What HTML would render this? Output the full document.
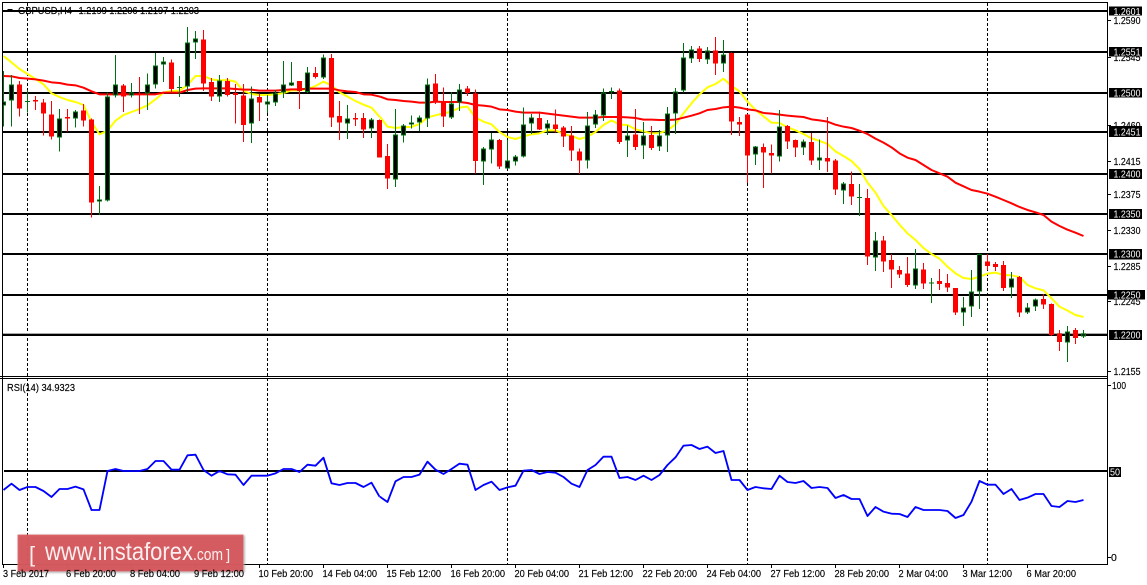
<!DOCTYPE html>
<html><head><meta charset="utf-8"><style>
html,body{margin:0;padding:0;background:#fff;width:1147px;height:585px;overflow:hidden}
svg{display:block}
text{font-family:"Liberation Sans",sans-serif;font-size:10.5px;fill:#000;stroke:#000;stroke-width:.15}
.l text,text.w{fill:#fff;stroke:none}
.ma{fill:none;stroke-linejoin:round}
.wr{fill:none;stroke:#f00;stroke-width:3}
.br{fill:none;stroke:#f00;stroke-width:15}
.wg{fill:none;stroke:#007010;stroke-width:3}
.bg{fill:none;stroke:#007010;stroke-width:15}
.bk{fill:none;stroke:#000;stroke-width:9}
</style></head><body>
<svg width="1147" height="585" viewBox="0 0 1147 585" xmlns="http://www.w3.org/2000/svg">
<defs><clipPath id="c"><rect x="3" y="3" width="1104" height="373"/></clipPath></defs>
<rect width="1147" height="585" fill="#fff"/>

<!-- vertical grid -->
<path d="M27.5 3V564M267.5 3V564M507.5 3V564M747.5 3V564M987.5 3V564" stroke="#000" stroke-width="1" stroke-dasharray="3 2" fill="none" shape-rendering="crispEdges"/>

<!-- legend -->
<path d="M7 9h6l-3 3z" fill="#000"/>
<text x="18" y="14" textLength="54" lengthAdjust="spacingAndGlyphs">GBPUSD,H4</text>
<text x="78.5" y="14" textLength="120.5" lengthAdjust="spacingAndGlyphs">1.2199 1.2206 1.2197 1.2203</text>

<!-- horizontal levels -->
<g fill="#000" shape-rendering="crispEdges">
<rect x="3" y="10" width="1104" height="2"/>
<rect x="3" y="51" width="1104" height="2"/>
<rect x="3" y="92" width="1104" height="2"/>
<rect x="3" y="131" width="1104" height="2"/>
<rect x="3" y="173" width="1104" height="2"/>
<rect x="3" y="213" width="1104" height="2"/>
<rect x="3" y="253" width="1104" height="2"/>
<rect x="3" y="294" width="1104" height="2"/>
<rect x="3" y="333" width="1104" height="1" fill="#aaa"/>
<rect x="3" y="334" width="1104" height="2"/>
<rect x="4" y="470" width="1103" height="2"/>
</g>

<g clip-path="url(#c)">
<!-- moving averages -->
<g transform="translate(0.17,0) scale(.33333)" class="ma" stroke="#ff0" stroke-width="6">
<polyline points="10,168 34,187 58,207 82,222 106,237 130,253 154,280 178,291 202,300 226,306 250,315 274,366 298,403 322,392 346,362 370,345 394,336 418,327 442,316 466,298 490,278 514,273 538,272 562,255 586,228 610,228 634,238 658,241 682,240 706,245 730,273 754,282 778,285 802,285 826,283 850,279 874,271 898,271 922,267 946,258 970,245 994,256 1018,277 1042,290 1066,303 1090,314 1114,323 1138,350"/>
</g>
<g transform="translate(380.17,0) scale(.33333)" class="ma" stroke="#ff0" stroke-width="6">
<polyline points="-1,350 22,380 46,384 70,381 94,381 118,372 142,352 166,346 190,340 214,335 238,323 262,320 286,353 310,365 334,373 358,396 382,411 406,417 430,409 454,403 478,400 502,391 526,391 550,402 574,408 598,417 622,410 646,396 670,375 694,361 718,374 742,375 766,388 790,394 814,400 838,399 862,391 886,373 910,340 934,310 958,283 982,262 1006,252 1030,236 1054,258 1078,274 1102,305 1126,330 1150,349"/>
</g>
<g transform="translate(760.17,0) scale(.33333)" class="ma" stroke="#ff0" stroke-width="6">
<polyline points="10,349 34,368 58,369 82,382 106,391 130,402 154,415 178,423 202,432 226,454 250,468 274,483 298,507 322,548 346,578 370,618 394,645 418,674 442,700 466,720 490,744 514,762 538,776 562,800 586,820 610,834 634,837 658,830 682,821 706,818 730,825 754,826 778,831 802,855 826,865 850,871 874,895 898,920 922,932 946,945 970,951"/>
</g>
<g transform="translate(0.17,0) scale(.33333)" class="ma" stroke="#f00" stroke-width="6">
<polyline points="10,228 34,229 58,234 82,236 106,238 130,242 154,247 178,249 202,254 226,256 250,263 274,274 298,283 322,283 466,283 490,278 538,278 562,270 586,266 610,265 682,265 706,267 730,269 754,269 778,272 826,272 850,270 874,268 898,268 922,266 994,266 1018,271 1042,274 1066,276 1090,283 1114,284 1140,290"/>
</g>
<g transform="translate(380.17,0) scale(.33333)" class="ma" stroke="#f00" stroke-width="6">
<polyline points="0,290 22,298 46,300 70,303 94,305 118,308 142,308 166,305 190,306 238,306 262,309 286,315 310,317 334,320 358,328 382,330 406,335 430,338 478,338 502,341 526,344 550,347 574,350 598,353 646,353 670,351 718,351 742,352 766,354 790,359 814,359 838,360 862,360 886,359 910,353 934,347 958,340 982,330 1006,327 1030,322 1054,320 1078,323 1102,328 1126,331 1150,339"/>
</g>
<g transform="translate(760.17,0) scale(.33333)" class="ma" stroke="#f00" stroke-width="6">
<polyline points="10,339 34,341 58,344 82,347 106,349 130,351 154,358 178,361 202,365 226,374 250,380 274,384 298,392 322,402 346,416 370,428 394,442 418,460 442,473 466,480 490,495 514,510 538,520 562,530 586,548 610,559 634,570 658,575 682,581 706,590 730,600 754,610 778,621 802,630 826,637 850,645 874,665 898,678 922,689 946,698 970,708"/>
</g>

<!-- candles -->
<g shape-rendering="crispEdges">
<g transform="translate(0.17,0) scale(.33333)">
<path class="wr" d="M58 243V350M106 288V330M130 297V407M154 303V419M202 327V394M250 312V380M274 355V653M370 252V336M418 231V342M514 178V279M610 90V273M634 234V303M682 234V290M706 252V370M730 252V426M778 280V363M898 243V327M946 201V235M994 162V381M1018 303V420M1066 339V378M1090 339V414M1138 358V473"/>
<path class="br" d="M58 253V326M106 300V304M130 307V341M154 343V410M202 351V356M250 331V362M274 358V608M370 256V290M418 282V284M514 187V267M610 118V251M634 246V290M682 243V285M706 279V285M730 286V375M778 291V308M898 243V273M946 219V231M994 174V353M1018 348V368M1066 354V359M1090 354V389M1138 360V473"/>
<path class="wg" d="M10 213V380M34 225V380M178 327V455M226 330V383M298 558V645M322 278V605M346 165V293M394 249V293M442 220V330M466 159V266M490 171V246M562 81V278M586 93V177M658 225V306M754 259V429M802 285V339M826 270V318M850 183V294M874 186V258M922 201V279M970 163V237M1042 315V417M1114 354V414M82 270V338M75 305h15M538 228V291M531 262h15"/>
<path class="bg" d="M10 304V316M34 253V301M178 355V412M226 334V355M298 598V604M322 289V602M346 253V286M394 278V287M442 253V281M466 196V253M490 184V193M562 127V259M586 115V127M658 241V290M754 295V370M802 304V314M826 280V307M850 253V278M874 247V256M922 217V276M970 172V232M1042 355V370M1114 358V385"/>
<path class="bk" d="M10 307V313M34 256V298M178 358V409M226 337V352M298 600V602M322 292V599M346 256V283M394 281V284M442 256V278M466 199V250M490 187V190M562 130V256M586 118V124M658 244V287M754 298V367M802 307V311M826 283V304M850 256V275M874 250V253M922 220V273M970 175V229M1042 358V367M1114 361V382"/>
</g>
<g transform="translate(380.17,0) scale(.33333)">
<path class="wr" d="M22 432V567M166 222V312M190 262V381M262 258V288M286 268V520M358 417V507M478 334V390M526 328V398M550 378V441M574 378V483M598 445V522M718 265V432M766 327V450M814 378V450M958 138V186M1006 111V225M1054 157V405M1078 351V408M1102 342V549"/>
<path class="br" d="M22 468V536M166 250V306M190 306V350M262 265V279M286 280V483M358 420V500M478 354V389M526 373V387M550 382V410M574 406V452M598 454V482M718 271V426M766 403V441M814 405V444M958 145V177M1006 151V191M1054 159V365M1078 366V374M1102 343V467"/>
<path class="wg" d="M46 327V561M70 372V428M94 346V385M118 346V393M142 235V381M214 276V357M238 252V333M310 441V555M334 399V491M382 420V507M406 465V497M430 322V473M454 342V402M502 360V405M622 336V506M646 330V384M670 265V363M742 376V471M790 366V477M838 390V453M862 321V456M886 264V402M910 129V277M934 138V189M982 141V192M1030 120V216M1126 438V495M694 262V297M687 275h15"/>
<path class="bg" d="M46 403V538M70 376V406M94 367V373M118 352V367M142 253V355M214 310V353M238 268V307M310 445V484M334 418V448M382 481V506M406 469V484M430 373V470M454 352V370M502 370V386M622 376V481M646 343V373M670 277V347M742 406V421M790 406V436M838 406V439M862 341V406M886 274V340M910 172V271M934 148V175M982 151V178M1030 163V190M1126 439V463"/>
<path class="bk" d="M46 406V535M70 379V403M94 369V371M118 355V364M142 256V352M214 313V350M238 271V304M310 448V481M334 421V445M382 484V503M406 472V481M430 376V467M454 355V367M502 373V383M622 379V478M646 346V370M670 280V344M742 409V418M790 409V433M838 409V436M862 344V403M886 277V337M910 175V268M934 151V172M982 154V175M1030 166V187M1126 442V460"/>
</g>
<g transform="translate(760.17,0) scale(.33333)">
<path class="wr" d="M10 430V564M34 433V520M82 375V447M106 418V471M154 399V495M202 351V516M226 477V585M274 514V615M322 567V795"/>
<path class="br" d="M10 441V458M34 459V467M82 378V425M106 420V443M154 426V482M202 474V485M226 481V569M274 552V590M322 594V770"/>
<path class="wg" d="M58 330V485M130 418V465M178 418V510M250 546V612M298 552V648M291 592h15"/>
<path class="bg" d="M58 380V469M130 424V442M178 472V481M250 550V571"/>
<path class="bk" d="M58 383V466M130 427V439M178 475V478M250 553V568"/>
</g>
<g transform="translate(760.17,180) scale(.33333)">
<path class="wr" d="M370 168V276M394 222V324M418 258V294M442 231V321M490 249V327M538 267V330M562 282V336M586 324V405M682 222V270M706 246V273M730 243V333M778 288V411M850 342V387M874 370V468M898 450V513M946 444V492"/>
<path class="br" d="M370 181V245M394 240V269M418 270V284M442 280V315M490 268V311M538 303V312M562 309V323M586 324V398M682 245V258M706 252V261M730 255V324M778 291V398M850 357V374M874 372V465M898 460V486M946 450V474"/>
<path class="wg" d="M346 156V273M466 207V327M610 351V438M634 270V411M658 220V387M754 276V354M802 369V402M826 355V393M922 438V546M970 450V474M514 294V369M507 309h15"/>
<path class="bg" d="M346 182V232M466 265V317M610 382V397M634 335V379M658 222V334M754 296V322M802 382V397M826 358V379M922 454V487M970 460V470"/>
<path class="bk" d="M346 185V229M466 268V314M610 385V394M634 338V376M658 225V331M754 299V319M802 385V394M826 361V376M922 457V484M970 463V467"/>
</g>
</g>
</g>

<!-- RSI -->
<g class="ma" stroke="#00f" stroke-width="5.5">
<polyline transform="translate(0.17,375) scale(.33333)" points="10,345 34,326 58,345 82,336 106,336 130,348 154,366 178,342 202,342 226,335 250,343 274,405 298,405 322,288 346,282 370,288 418,288 442,282 466,258 490,258 514,284 538,284 562,241 586,239 610,285 634,302 658,288 682,298 706,299 730,330 754,302 802,302 826,295 850,282 874,282 898,291 922,269 946,272 970,248 994,325 1018,330 1042,324 1066,324 1090,336 1114,323 1138,365"/>
<polyline transform="translate(380.17,375) scale(.33333)" points="-1,365 22,381 46,319 70,306 94,306 118,299 142,260 166,284 190,297 214,282 238,266 262,269 286,345 310,330 334,320 358,345 382,337 406,332 430,287 454,285 478,297 502,291 526,293 550,306 574,326 598,336 622,285 646,270 670,245 694,245 718,309 742,306 766,315 790,302 814,315 838,300 862,270 886,247 910,212 934,210 958,222 982,215 1006,234 1030,228 1054,315 1078,315 1102,345 1126,336 1150,340"/>
<polyline transform="translate(760.17,375) scale(.33333)" points="10,340 34,342 58,302 82,321 106,324 130,318 154,339 178,336 202,339 226,369 250,360 274,372 298,372 322,423 346,396 370,410 394,416 418,417 442,426 466,396 490,405 538,405 562,408 586,429 610,420 634,380 658,318 682,329 706,329 730,357 754,342 778,375 802,368 826,357 850,357 874,393 898,396 922,378 946,381 970,375"/>
</g>
<text x="7" y="391" textLength="68" lengthAdjust="spacingAndGlyphs">RSI(14) 34.9323</text>

<!-- frame -->
<g fill="#000" shape-rendering="crispEdges">
<rect x="2" y="2" width="1106" height="1"/>
<rect x="2" y="2" width="1" height="563"/>
<rect x="1107" y="2" width="1" height="563"/>
<rect x="0" y="376" width="1108" height="1"/>
<rect x="0" y="378" width="1108" height="1"/>
<rect x="2" y="564" width="1106" height="1"/>
<path d="M1108 20h3v1h-3zM1108 57h3v1h-3zM1108 125h3v1h-3zM1108 161h3v1h-3zM1108 194h3v1h-3zM1108 230h3v1h-3zM1108 266h3v1h-3zM1108 301h3v1h-3zM1108 371h3v1h-3zM1108 385h3v1h-3zM1108 557h3v1h-3z"/>
<path d="M3 565h1v3h-1zM67 565h1v3h-1zM131 565h1v3h-1zM195 565h1v3h-1zM259 565h1v3h-1zM323 565h1v3h-1zM387 565h1v3h-1zM451 565h1v3h-1zM515 565h1v3h-1zM579 565h1v3h-1zM643 565h1v3h-1zM707 565h1v3h-1zM771 565h1v3h-1zM835 565h1v3h-1zM899 565h1v3h-1zM963 565h1v3h-1zM1027 565h1v3h-1z"/>
</g>

<!-- axis prices -->
<g>
<text x="1113.5" y="24" textLength="27" lengthAdjust="spacingAndGlyphs">1.2590</text>
<text x="1113.5" y="61" textLength="27" lengthAdjust="spacingAndGlyphs">1.2545</text>
<text x="1113.5" y="129" textLength="27" lengthAdjust="spacingAndGlyphs">1.2460</text>
<text x="1113.5" y="165" textLength="27" lengthAdjust="spacingAndGlyphs">1.2415</text>
<text x="1113.5" y="198" textLength="27" lengthAdjust="spacingAndGlyphs">1.2375</text>
<text x="1113.5" y="234" textLength="27" lengthAdjust="spacingAndGlyphs">1.2330</text>
<text x="1113.5" y="270" textLength="27" lengthAdjust="spacingAndGlyphs">1.2285</text>
<text x="1113.5" y="305" textLength="27" lengthAdjust="spacingAndGlyphs">1.2245</text>
<text x="1113.5" y="375" textLength="27" lengthAdjust="spacingAndGlyphs">1.2155</text>
<text x="1112" y="389" textLength="14" lengthAdjust="spacingAndGlyphs">100</text>
<text x="1111" y="561">0</text>
</g>

<!-- price labels -->
<g fill="#000" shape-rendering="crispEdges">
<rect x="1109" y="6.500" width="33" height="9"/>
<rect x="1109" y="47" width="33" height="9.500"/>
<rect x="1109" y="88" width="33" height="9.500"/>
<rect x="1109" y="126" width="33" height="11"/>
<rect x="1109" y="169" width="33" height="10"/>
<rect x="1109" y="209" width="33" height="10"/>
<rect x="1109" y="249" width="33" height="10.500"/>
<rect x="1108" y="290" width="37" height="9.500"/>
<rect x="1109" y="330" width="33" height="10"/>
<rect x="1109" y="467" width="12" height="10"/>
</g>
<g class="l">
<text x="1113.5" y="15" textLength="27" lengthAdjust="spacingAndGlyphs">1.2601</text>
<text x="1113.5" y="55.500" textLength="27" lengthAdjust="spacingAndGlyphs">1.2551</text>
<text x="1113.5" y="96.500" textLength="27" lengthAdjust="spacingAndGlyphs">1.2500</text>
<text x="1113.5" y="135.500" textLength="27" lengthAdjust="spacingAndGlyphs">1.2451</text>
<text x="1113.5" y="177.500" textLength="27" lengthAdjust="spacingAndGlyphs">1.2400</text>
<text x="1113.5" y="217.500" textLength="27" lengthAdjust="spacingAndGlyphs">1.2350</text>
<text x="1113.5" y="257.500" textLength="27" lengthAdjust="spacingAndGlyphs">1.2300</text>
<text x="1113.5" y="298.500" textLength="27" lengthAdjust="spacingAndGlyphs">1.2250</text>
<text x="1113.5" y="338.500" textLength="27" lengthAdjust="spacingAndGlyphs">1.2200</text>
<text x="1110" y="475.500" textLength="10" lengthAdjust="spacingAndGlyphs">50</text>
</g>

<!-- watermark -->
<rect x="17.500" y="534.500" width="226" height="37" fill="#dc4f55" fill-opacity=".86" stroke="#fff" stroke-opacity=".15" style="filter:drop-shadow(1px 1px 1px #999)"/>
<text class="w" x="29" y="562" style="font-size:22px" opacity=".9">[</text>
<text class="w" x="45" y="560" style="font-size:25px" textLength="148" lengthAdjust="spacingAndGlyphs" opacity=".9">www.instaforex</text>
<text class="w" x="193" y="560" style="font-size:17px" textLength="30" lengthAdjust="spacingAndGlyphs" opacity=".9">.com</text>
<text class="w" x="226" y="560" style="font-size:15px" opacity=".9">]</text>

<!-- dates -->
<g>
<text x="3" y="577" textLength="46" lengthAdjust="spacingAndGlyphs">3 Feb 2017</text>
<text x="66" y="577" textLength="50" lengthAdjust="spacingAndGlyphs">6 Feb 20:00</text>
<text x="130" y="577" textLength="50" lengthAdjust="spacingAndGlyphs">8 Feb 04:00</text>
<text x="194" y="577" textLength="50" lengthAdjust="spacingAndGlyphs">9 Feb 12:00</text>
<text x="258.500" y="577" textLength="54.500" lengthAdjust="spacingAndGlyphs">10 Feb 20:00</text>
<text x="322.500" y="577" textLength="54.500" lengthAdjust="spacingAndGlyphs">14 Feb 04:00</text>
<text x="386.500" y="577" textLength="54.500" lengthAdjust="spacingAndGlyphs">15 Feb 12:00</text>
<text x="450.500" y="577" textLength="54.500" lengthAdjust="spacingAndGlyphs">16 Feb 20:00</text>
<text x="514.500" y="577" textLength="54.500" lengthAdjust="spacingAndGlyphs">20 Feb 04:00</text>
<text x="578.500" y="577" textLength="54.500" lengthAdjust="spacingAndGlyphs">21 Feb 12:00</text>
<text x="642.500" y="577" textLength="54.500" lengthAdjust="spacingAndGlyphs">22 Feb 20:00</text>
<text x="706.500" y="577" textLength="54.500" lengthAdjust="spacingAndGlyphs">24 Feb 04:00</text>
<text x="770.500" y="577" textLength="54.500" lengthAdjust="spacingAndGlyphs">27 Feb 12:00</text>
<text x="834.500" y="577" textLength="54.500" lengthAdjust="spacingAndGlyphs">28 Feb 20:00</text>
<text x="898.500" y="577" textLength="49.500" lengthAdjust="spacingAndGlyphs">2 Mar 04:00</text>
<text x="962.500" y="577" textLength="49.500" lengthAdjust="spacingAndGlyphs">3 Mar 12:00</text>
<text x="1026.500" y="577" textLength="49.500" lengthAdjust="spacingAndGlyphs">6 Mar 20:00</text>
</g>
</svg>
</body></html>
